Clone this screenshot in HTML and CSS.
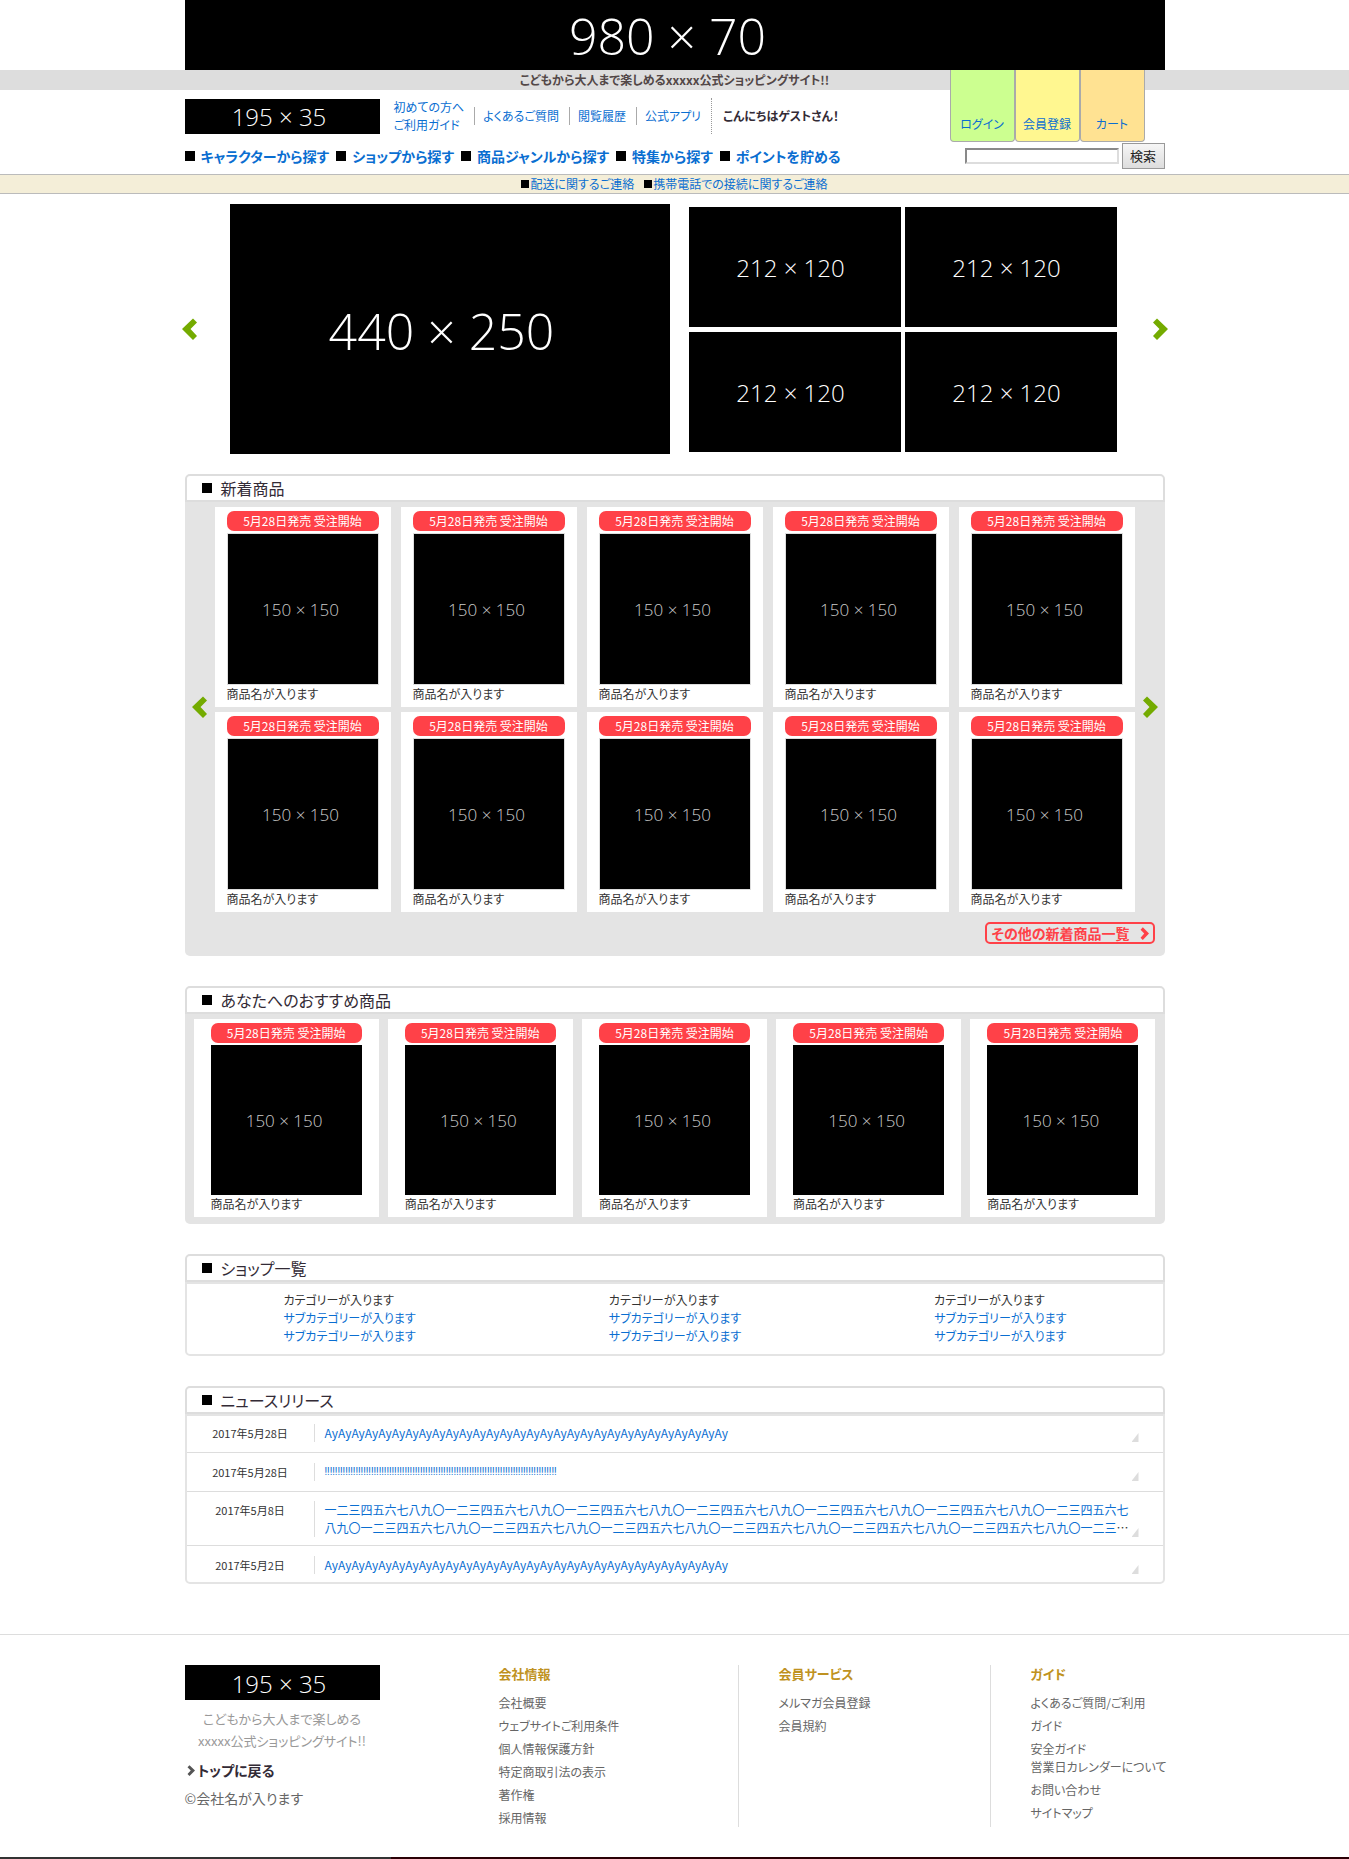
FILE: index.html
```html
<!DOCTYPE html>
<html lang="ja">
<head>
<meta charset="utf-8">
<title>xxxxx公式ショッピングサイト</title>
<meta name="viewport" content="width=device-width, initial-scale=1">
<link rel="stylesheet" href="styles.css">
</head>
<body>
<svg class="defs" width="0" height="0" aria-hidden="true">
  <symbol id="chevron" viewBox="0 0 16 22"><path d="M1 4.500 5 .5 16 11 5 22 1 18 7.500 11Z"/></symbol>
</svg>
<div class="banner container">980 × 70</div>
<p class="tagline">こどもから大人まで楽しめるxxxxx公式ショッピングサイト!!</p>
<header class="header container">
  <div class="header-top">
    <a class="logo" href="#">195 × 35</a>
    <ul class="help">
      <li><a href="#">初めての方へ<br>ご利用ガイド</a></li>
      <li><a href="#">よくあるご質問</a></li>
      <li><a href="#">閲覧履歴</a></li>
      <li><a href="#">公式アプリ</a></li>
    </ul>
    <p class="greeting">こんにちはゲストさん！</p>
  </div>
  <div class="tabs">
    <a class="tab tab-login" href="#">ログイン</a>
    <a class="tab tab-join" href="#">会員登録</a>
    <a class="tab tab-cart" href="#">カート</a>
  </div>
  <div class="header-nav">
    <nav class="nav">
      <a href="#"><span class="dot"></span>キャラクターから探す</a>
      <a href="#"><span class="dot"></span>ショップから探す</a>
      <a href="#"><span class="dot"></span>商品ジャンルから探す</a>
      <a href="#"><span class="dot"></span>特集から探す</a>
      <a href="#"><span class="dot"></span>ポイントを貯める</a>
    </nav>
    <form class="search">
      <input type="text" aria-label="検索">
      <button type="button">検索</button>
    </form>
  </div>
</header>
<div class="notice">
  <a href="#"><span class="dot dot-small"></span>配送に関するご連絡</a>
  <a href="#"><span class="dot dot-small"></span>携帯電話での接続に関するご連絡</a>
</div>
<main class="container">
  <div class="hero">
    <button class="arrow arrow-prev" aria-label="前へ"><svg width="16" height="22"><use href="#chevron"/></svg></button>
    <a class="ph hero-main" href="#">440 × 250</a>
    <div class="hero-grid">
      <a class="ph" href="#">212 × 120</a>
      <a class="ph" href="#">212 × 120</a>
      <a class="ph" href="#">212 × 120</a>
      <a class="ph" href="#">212 × 120</a>
    </div>
    <button class="arrow arrow-next" aria-label="次へ"><svg width="16" height="22"><use href="#chevron"/></svg></button>
  </div>

  <section class="panel">
    <h2><span class="dot"></span>新着商品</h2>
    <div class="shelf shelf-new">
      <button class="arrow arrow-prev" aria-label="前へ"><svg width="16" height="22"><use href="#chevron"/></svg></button>
      <ul class="cards">
        <li class="card"><p class="ribbon">5月28日発売 受注開始</p><div class="thumb">150 × 150</div><p>商品名が入ります</p></li>
        <li class="card"><p class="ribbon">5月28日発売 受注開始</p><div class="thumb">150 × 150</div><p>商品名が入ります</p></li>
        <li class="card"><p class="ribbon">5月28日発売 受注開始</p><div class="thumb">150 × 150</div><p>商品名が入ります</p></li>
        <li class="card"><p class="ribbon">5月28日発売 受注開始</p><div class="thumb">150 × 150</div><p>商品名が入ります</p></li>
        <li class="card"><p class="ribbon">5月28日発売 受注開始</p><div class="thumb">150 × 150</div><p>商品名が入ります</p></li>
        <li class="card"><p class="ribbon">5月28日発売 受注開始</p><div class="thumb">150 × 150</div><p>商品名が入ります</p></li>
        <li class="card"><p class="ribbon">5月28日発売 受注開始</p><div class="thumb">150 × 150</div><p>商品名が入ります</p></li>
        <li class="card"><p class="ribbon">5月28日発売 受注開始</p><div class="thumb">150 × 150</div><p>商品名が入ります</p></li>
        <li class="card"><p class="ribbon">5月28日発売 受注開始</p><div class="thumb">150 × 150</div><p>商品名が入ります</p></li>
        <li class="card"><p class="ribbon">5月28日発売 受注開始</p><div class="thumb">150 × 150</div><p>商品名が入ります</p></li>
      </ul>
      <button class="arrow arrow-next" aria-label="次へ"><svg width="16" height="22"><use href="#chevron"/></svg></button>
      <a class="more" href="#">その他の新着商品一覧<svg width="9" height="13" viewBox="0 0 16 22" preserveAspectRatio="none"><use href="#chevron"/></svg></a>
    </div>
  </section>

  <section class="panel">
    <h2><span class="dot"></span>あなたへのおすすめ商品</h2>
    <div class="shelf shelf-picks">
      <ul class="cards">
        <li class="card"><p class="ribbon">5月28日発売 受注開始</p><div class="thumb">150 × 150</div><p>商品名が入ります</p></li>
        <li class="card"><p class="ribbon">5月28日発売 受注開始</p><div class="thumb">150 × 150</div><p>商品名が入ります</p></li>
        <li class="card"><p class="ribbon">5月28日発売 受注開始</p><div class="thumb">150 × 150</div><p>商品名が入ります</p></li>
        <li class="card"><p class="ribbon">5月28日発売 受注開始</p><div class="thumb">150 × 150</div><p>商品名が入ります</p></li>
        <li class="card"><p class="ribbon">5月28日発売 受注開始</p><div class="thumb">150 × 150</div><p>商品名が入ります</p></li>
      </ul>
    </div>
  </section>

  <section class="panel">
    <h2><span class="dot"></span>ショップ一覧</h2>
    <div class="box shops">
      <ul><li>カテゴリーが入ります</li><li><a href="#">サブカテゴリーが入ります</a></li><li><a href="#">サブカテゴリーが入ります</a></li></ul>
      <ul><li>カテゴリーが入ります</li><li><a href="#">サブカテゴリーが入ります</a></li><li><a href="#">サブカテゴリーが入ります</a></li></ul>
      <ul><li>カテゴリーが入ります</li><li><a href="#">サブカテゴリーが入ります</a></li><li><a href="#">サブカテゴリーが入ります</a></li></ul>
    </div>
  </section>

  <section class="panel">
    <h2><span class="dot"></span>ニュースリリース</h2>
    <ul class="box news">
      <li><time>2017年5月28日</time><p><a href="#">AyAyAyAyAyAyAyAyAyAyAyAyAyAyAyAyAyAyAyAyAyAyAyAyAyAyAyAyAyAy</a></p><i class="corner"></i></li>
      <li><time>2017年5月28日</time><p class="marks"><a href="#">!!!!!!!!!!!!!!!!!!!!!!!!!!!!!!!!!!!!!!!!!!!!!!!!!!!!!!!!!!!!!!!!!!!!!!!!!!!!!!!!!!!!!!!!!!</a></p><i class="corner"></i></li>
      <li class="long"><time>2017年5月8日</time><p><a href="#">一二三四五六七八九〇一二三四五六七八九〇一二三四五六七八九〇一二三四五六七八九〇一二三四五六七八九〇一二三四五六七八九〇一二三四五六七八九〇一二三四五六七八九〇一二三四五六七八九〇一二三四五六七八九〇一二三四五六七八九〇一二三四五六七八九〇一二三四五六七八九〇一二三<span class="ellipsis">…</span></a></p><i class="corner"></i></li>
      <li><time>2017年5月2日</time><p><a href="#">AyAyAyAyAyAyAyAyAyAyAyAyAyAyAyAyAyAyAyAyAyAyAyAyAyAyAyAyAyAy</a></p><i class="corner"></i></li>
    </ul>
  </section>
</main>
<footer class="footer">
  <div class="footer-grid container">
    <div class="about">
      <a class="logo" href="#">195 × 35</a>
      <p class="about-text">こどもから大人まで楽しめる<br>xxxxx公式ショッピングサイト!!</p>
      <a class="to-top" href="#"><svg width="8" height="11" viewBox="0 0 16 22"><use href="#chevron"/></svg>トップに戻る</a>
      <p class="copyright">©会社名が入ります</p>
    </div>
    <div class="links">
      <h3>会社情報</h3>
      <ul>
        <li><a href="#">会社概要</a></li>
        <li><a href="#">ウェブサイトご利用条件</a></li>
        <li><a href="#">個人情報保護方針</a></li>
        <li><a href="#">特定商取引法の表示</a></li>
        <li><a href="#">著作権</a></li>
        <li><a href="#">採用情報</a></li>
      </ul>
    </div>
    <div class="links">
      <h3>会員サービス</h3>
      <ul>
        <li><a href="#">メルマガ会員登録</a></li>
        <li><a href="#">会員規約</a></li>
      </ul>
    </div>
    <div class="links">
      <h3>ガイド</h3>
      <ul>
        <li><a href="#">よくあるご質問/ご利用</a></li>
        <li><a href="#">ガイド</a></li>
        <li><a href="#">安全ガイド<br>営業日カレンダーについて</a></li>
        <li><a href="#">お問い合わせ</a></li>
        <li><a href="#">サイトマップ</a></li>
      </ul>
    </div>
  </div>
</footer>
</body>
</html>
```
FILE: styles.css
```css
* { box-sizing: border-box; }

body {
  margin: 0;
  background: #fff;
  color: #333;
  font: 12px/18px "Noto Sans CJK JP", "Liberation Sans", sans-serif;
  font-feature-settings: "palt";
}

p, h2, h3, ul { margin: 0; padding: 0; }
ul { list-style: none; }
a { color: #0a6ed1; text-decoration: none; }
svg { fill: currentColor; }
.defs { position: absolute; }

.container { max-width: 980px; margin: 0 auto; }

/* Placeholder pictures */
.banner, .logo, .ph, .thumb {
  display: flex;
  align-items: center;
  justify-content: center;
  background: #000;
  color: #fff;
  font-family: "Open Sans", sans-serif;
  font-weight: 300;
  font-size: 24px;
  line-height: 1;
  white-space: nowrap;
}
.banner { height: 70px; padding: 2px 14px 0 0; font-size: 50px; }
.logo { width: 195px; height: 35px; padding: 2px 6px 0 0; }

.dot { display: inline-block; flex: none; width: 10px; height: 10px; background: #000; }
.dot-small { width: 8px; height: 8px; }

/* Header */
.tagline {
  height: 20px;
  background: #ddd;
  color: #524747;
  font-weight: bold;
  line-height: 20px;
  text-align: center;
}
.header { position: relative; }
.header-top { display: flex; align-items: center; height: 44px; padding-top: 8px; }
.help { display: flex; align-items: center; margin-left: 14px; }
.help li { padding-right: 10px; white-space: nowrap; }
.help li + li { padding-left: 8px; border-left: 1px solid #aaa; }
.greeting {
  padding-left: 11px;
  border-left: 1px dotted #999;
  color: #332b36;
  font-weight: bold;
  line-height: 36px;
}
.tabs { position: absolute; top: -20px; right: 20px; display: flex; }
.tab {
  display: flex;
  align-items: flex-end;
  justify-content: center;
  width: 65px;
  height: 72px;
  padding-bottom: 8px;
  border: 1px solid #aaa;
  border-top: 0;
  border-radius: 0 0 4px 4px;
}
.tab-login { background: #ccff90; }
.tab-join { background: #fff790; }
.tab-cart { background: #ffe292; }
.header-nav { display: flex; align-items: center; justify-content: space-between; padding: 9px 0 5px; }
.nav { display: flex; gap: 7px; }
.nav a { display: flex; align-items: center; gap: 6px; font-size: 14px; font-weight: bold; white-space: nowrap; }
.search { display: flex; align-items: center; gap: 3px; }
.search input { width: 154px; height: 16px; padding: 0 2px; border: 2px inset #ddd; background: #fff; }
.search button {
  width: 43px;
  height: 26px;
  padding: 0;
  border: 1px solid #999;
  background: linear-gradient(#f6f6f6, #ddd);
  color: #222;
  font: 13px/18px "Noto Sans CJK JP", sans-serif;
}
.notice {
  display: flex;
  justify-content: center;
  gap: 10px;
  border: 1px solid #bbb;
  border-width: 1px 0;
  background: #f4eed8;
}
.notice a { display: flex; align-items: center; gap: 1px; }

/* Carousel */
.arrow {
  display: flex;
  align-items: center;
  justify-content: center;
  padding: 0;
  border: 0;
  background: none;
  color: #74ab00;
}
.arrow-prev svg { transform: scaleX(-1); }
.hero { display: flex; align-items: center; margin: 10px -3px 20px; }
.hero-main { width: 440px; height: 250px; margin: 0 19px 0 32px; padding: 4px 16px 0 0; font-size: 50px; }
.hero-grid { display: grid; grid-template-columns: 212px 212px; gap: 5px 4px; }
.hero-grid .ph { height: 120px; padding: 2px 8px 0 0; }
.hero .arrow-next { margin-left: auto; }

/* Panels */
.panel { margin-bottom: 30px; }
.panel h2 {
  display: flex;
  align-items: center;
  gap: 9px;
  height: 28px;
  padding-left: 15px;
  border: 2px solid #ddd;
  border-radius: 5px 5px 0 0;
  color: #332b36;
  font-size: 16px;
  font-weight: normal;
  line-height: 24px;
}
.shelf { border-radius: 0 0 5px 5px; background: #e4e4e4; }
.shelf-new { display: grid; grid-template-columns: 30px 1fr 30px; padding: 5px 0 12px; }
.shelf-new .arrow { padding-bottom: 5px; }
.shelf-picks { padding: 5px 9px 7px; }
.cards { display: grid; grid-template-columns: repeat(5, 1fr); gap: 5px 10px; }
.shelf-picks .cards { gap: 9px; }
.card { padding: 4px 12px; background: #fff; }
.shelf-picks .card { padding: 4px 17px; }
.ribbon {
  margin-bottom: 2px;
  border-radius: 7px;
  background: #ff4148;
  color: #fff;
  line-height: 20px;
  text-align: center;
}
.thumb { height: 152px; padding-right: 4px; border: 1px solid #ddd; color: #ccc; font-size: 17px; }
.shelf-picks .thumb { height: 150px; border: 0; }
.more {
  display: flex;
  align-items: center;
  justify-content: space-between;
  grid-column: 1 / -1;
  justify-self: end;
  width: 170px;
  height: 22px;
  margin: 10px 10px 0 0;
  padding: 0 4px 0 5px;
  border: 2px solid #ff4148;
  border-radius: 5px;
  color: #ff4148;
  font-size: 14px;
  font-weight: bold;
}
.box { border: 2px solid #e4e4e4; border-radius: 0 0 5px 5px; }
.shops { display: grid; grid-template-columns: repeat(3, 1fr); padding: 7px 0 9px; }
.shops ul { padding-left: 97px; }

.news li { display: flex; padding: 10px 24px 10px 0; }
.news li + li { border-top: 1px solid #ddd; }
.news li:first-child { padding-top: 8px; }
.news li:last-child { padding-bottom: 8px; }
.news time { width: 127px; font-size: 11px; text-align: center; }
.news p { flex: 1; padding-left: 10px; border-left: 1px solid #ddd; }
.news .marks { font-family: Roboto, sans-serif; font-size: 10px; }
.news .long { padding: 9px 24px 8px 0; font-feature-settings: normal; }
.ellipsis { color: #333; }
.corner {
  align-self: flex-end;
  width: 7px;
  height: 9px;
  background: #ddd;
  clip-path: polygon(100% 0, 100% 100%, 0 100%);
}

/* Footer */
.footer { margin-top: 50px; border-top: 1px solid #ddd; padding-top: 30px; }
.footer::after {
  content: "";
  display: block;
  height: 2px;
  margin-top: 30px;
  background: linear-gradient(to right, #333 29%, #2a0006 29%);
}
.footer-grid { display: grid; grid-template-columns: 314px 239px 252px 1fr; }
.about-text { width: 195px; margin: 8px 0; color: #999; font-size: 13px; line-height: 22px; text-align: center; }
.to-top { display: flex; align-items: center; gap: 3px; margin-bottom: 8px; padding-left: 2px; color: #332b36; font-size: 14px; font-weight: bold; line-height: 20px; }
.to-top svg { color: #555; }
.copyright { color: #666; font-size: 14px; line-height: 20px; }
.links { min-height: 162px; color: #666; white-space: nowrap; }
.links + .links { padding-left: 40px; border-left: 1px solid #ddd; }
.about + .links { padding-left: 0; border-left: 0; }
.links h3 { margin-bottom: 11px; color: #bf9221; font-size: 13px; line-height: 18px; }
.links li { margin-bottom: 5px; }
.links li:last-child { margin-bottom: 0; }
.links a { color: #666; }
```
